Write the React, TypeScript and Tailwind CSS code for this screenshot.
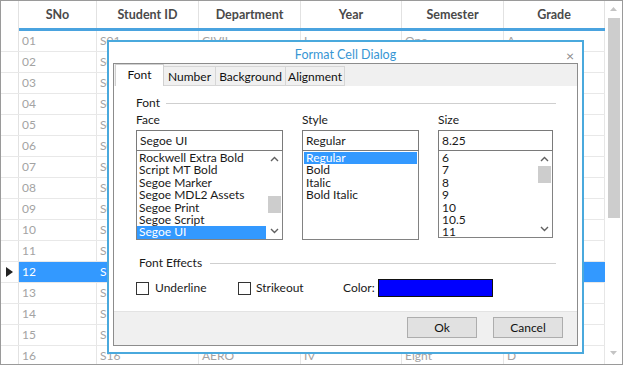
import React from "react";

const FONT = { fontFamily: '"Segoe UI", Lato, "Open Sans", sans-serif' };

const depts = ["CIVIL", "MECH", "EEE", "ECE", "CSE", "IT", "CHEM", "BIO", "CIVIL", "MECH", "EEE", "ECE", "CSE", "IT", "CHEM", "AERO"];
const years = ["I", "I", "II", "II", "III", "III", "IV", "IV", "I", "II", "III", "IV", "I", "II", "III", "IV"];
const sems = ["One", "Two", "Three", "Four", "Five", "Six", "Seven", "Eight", "One", "Three", "Five", "Seven", "Two", "Four", "Six", "Eight"];
const grades = ["A", "B", "C", "A", "B", "A", "C", "B", "A", "B", "C", "A", "B", "C", "A", "D"];

const rows = Array.from({ length: 16 }, (_, i) => {
  const n = String(i + 1).padStart(2, "0");
  return { sno: n, id: `S${n}`, dept: depts[i], year: years[i], sem: sems[i], grade: grades[i] };
});

const cols = [
  { key: "sno", label: "SNo", w: "w-[78px]" },
  { key: "id", label: "Student ID", w: "w-[102px]" },
  { key: "dept", label: "Department", w: "w-[102px]" },
  { key: "year", label: "Year", w: "w-[101px]" },
  { key: "sem", label: "Semester", w: "w-[102px]" },
  { key: "grade", label: "Grade", w: "w-[101px]" },
] as const;

function Chevron({ up }: { up?: boolean }) {
  return (
    <svg width="9" height="6" viewBox="0 0 9 6" className="text-[#606060]">
      <path d={up ? "M1 5 L4.5 1.5 L8 5" : "M1 1 L4.5 4.5 L8 1"} fill="none" stroke="currentColor" strokeWidth="1.4" />
    </svg>
  );
}

function ListScroll({ thumbTop }: { thumbTop: string }) {
  return (
    <div className="flex w-[16px] flex-col items-center border-l border-white">
      <div className="flex h-[14px] items-center justify-center pt-[2px]">
        <Chevron up />
      </div>
      <div className="relative w-full flex-1">
        <div className={`absolute left-[1px] right-[1px] h-[17px] bg-[#cdcdcd] ${thumbTop}`} />
      </div>
      <div className="flex h-[14px] items-center justify-center pb-[2px]">
        <Chevron />
      </div>
    </div>
  );
}

function Dialog() {
  const faces = ["Rockwell Extra Bold", "Script MT Bold", "Segoe Marker", "Segoe MDL2 Assets", "Segoe Print", "Segoe Script", "Segoe UI"];
  const styles = ["Regular", "Bold", "Italic", "Bold Italic"];
  const sizes = ["6", "7", "8", "9", "10", "10.5", "11"];

  return (
    <div className="absolute left-[107px] top-[40px] flex h-[314px] w-[477px] flex-col border-2 border-[#4aa9dd] bg-white">
      <div className="relative flex h-[21px] items-center justify-center pt-[5px] text-[12.5px] text-[#3796d4]">
        Format Cell Dialog
        <span className="absolute right-[8px] top-[3px] text-[14px] text-[#8a8a8a]">×</span>
      </div>
      <div className="mx-[4px] mb-[6px] flex flex-1 flex-col border border-[#8c8c8c] bg-[#f0f0f0]">
        {/* tabs */}
        <div className="flex h-[22px] items-end pl-[1px] text-[12px] text-[#111]">
          <div className="flex h-[22px] w-[49px] items-center justify-center border border-b-0 border-[#d0d0d0] bg-white pb-[1px]">Font</div>
          <div className="flex h-[20px] w-[52px] items-center justify-center border-y border-r border-[#d6d6d6] bg-[#f0f0f0] pt-[1px]">Number</div>
          <div className="flex h-[20px] w-[70px] items-center justify-center border-y border-r border-[#d6d6d6] bg-[#f0f0f0] pt-[1px]">Background</div>
          <div className="flex h-[20px] w-[59px] items-center justify-center border-y border-r border-[#d6d6d6] bg-[#f0f0f0] pt-[1px]">Alignment</div>
        </div>
        <div className="flex h-[225px] flex-col bg-white pl-[22px] pr-[21px] pt-[10px] text-[12px] text-[#1a1a1a]">
          <div className="flex h-[14px] items-center gap-[6px]">
            <span>Font</span>
            <div className="h-px flex-1 bg-[#cfcfcf]" />
          </div>
          <div className="mt-[2px] flex gap-[19px]">
            {/* Face */}
            <div className="flex w-[147px] flex-col">
              <div className="h-[16px] leading-[16px]">Face</div>
              <div className="mt-[2px] h-[21px] border border-[#7a7a7a] px-[3px] leading-[19px]">Segoe UI</div>
              <div className="flex h-[89px] border border-t-0 border-[#828282]">
                <div className="flex-1 pt-[1px]">
                  {faces.map((f) => (
                    <div
                      key={f}
                      className={`h-[12.4px] pl-[2px] leading-[12.4px] ${f === "Segoe UI" ? "bg-[#3399ff] text-white" : ""}`}
                    >
                      {f}
                    </div>
                  ))}
                </div>
                <ListScroll thumbTop="top-[31px]" />
              </div>
            </div>
            {/* Style */}
            <div className="flex w-[117px] flex-col">
              <div className="h-[16px] leading-[16px]">Style</div>
              <div className="mt-[2px] h-[21px] border border-[#7a7a7a] px-[3px] leading-[19px]">Regular</div>
              <div className="h-[89px] border border-t-0 border-[#828282] px-[1px] pt-[1px]">
                {styles.map((s) => (
                  <div
                    key={s}
                    className={`h-[12.4px] pl-[2px] leading-[12.4px] ${s === "Regular" ? "bg-[#3399ff] text-white" : ""}`}
                  >
                    {s}
                  </div>
                ))}
              </div>
            </div>
            {/* Size */}
            <div className="flex w-[115px] flex-col">
              <div className="h-[16px] leading-[16px]">Size</div>
              <div className="mt-[2px] h-[21px] border border-[#7a7a7a] px-[3px] leading-[19px]">8.25</div>
              <div className="flex h-[87px] border border-t-0 border-[#828282]">
                <div className="flex-1 pt-[1px]">
                  {sizes.map((s) => (
                    <div key={s} className="h-[12.4px] pl-[3px] leading-[12.4px]">
                      {s}
                    </div>
                  ))}
                </div>
                <ListScroll thumbTop="top-[1px]" />
              </div>
            </div>
          </div>
          <div className="mt-[16px] flex h-[14px] items-center gap-[8px] pl-[3px]">
            <span>Font Effects</span>
            <div className="h-px flex-1 bg-[#cfcfcf]" />
          </div>
          <div className="mt-[9px] flex h-[18px] items-center">
            <div className="flex w-[102px] items-center">
              <div className="h-[13px] w-[13px] border border-[#333]" />
              <span className="ml-[6px]">Underline</span>
            </div>
            <div className="flex w-[105px] items-center">
              <div className="h-[13px] w-[13px] border border-[#333]" />
              <span className="ml-[5px]">Strikeout</span>
            </div>
            <span className="w-[35px]">Color:</span>
            <div className="h-[18px] w-[115px] border border-[#111] bg-[#0000ff]" />
          </div>
        </div>
        <div className="flex flex-1 items-start justify-end gap-[16px] border-t border-[#e3e3e3] pr-[14px] pt-[5px] text-[12px] text-[#111]">
          <button className="flex h-[21px] w-[70px] items-center justify-center border border-[#adadad] bg-[#e1e1e1]">Ok</button>
          <button className="flex h-[21px] w-[70px] items-center justify-center border border-[#adadad] bg-[#e1e1e1]">Cancel</button>
        </div>
      </div>
    </div>
  );
}

export default function App() {
  return (
    <div style={FONT} className="relative h-[366px] w-[624px] overflow-hidden bg-white">
      <div className="flex h-[365px] w-[623px] overflow-hidden border border-[#9a9a9a]">
        <div className="flex w-[604px] flex-col">
          {/* header */}
          <div className="flex h-[30px] shrink-0">
            <div className="w-[18px] border-r border-[#e2e2e2]" />
            <div className="flex flex-col">
              <div className="flex h-[27px]">
                {cols.map((c) => (
                  <div
                    key={c.key}
                    className={`${c.w} flex items-center justify-center border-r border-[#e2e2e2] pt-[2px] text-[12.5px] font-bold text-[#4a4a4a]`}
                  >
                    {c.label}
                  </div>
                ))}
              </div>
              <div className="h-[3px] bg-[#4aa3df]" />
            </div>
          </div>
          {rows.map((r, i) => {
            const sel = i === 11;
            return (
              <div key={r.sno} className="flex h-[21px] shrink-0 border-b border-[#e8e8e8]">
                <div className="flex w-[18px] items-center justify-center border-r border-[#e2e2e2]">
                  {sel && (
                    <svg width="7" height="10" viewBox="0 0 7 10">
                      <path d="M0 0 L7 5 L0 10 Z" fill="#222" />
                    </svg>
                  )}
                </div>
                {cols.map((c) => (
                  <div
                    key={c.key}
                    className={`${c.w} flex items-center border-r pl-[3px] text-[12px] ${
                      sel ? "border-[#3399ff] bg-[#3399ff] text-white" : "border-[#e6e6e6] text-[#a3a3a3]"
                    }`}
                  >
                    {r[c.key]}
                  </div>
                ))}
              </div>
            );
          })}
        </div>
        {/* vertical scrollbar */}
        <div className="flex w-[17px] flex-col items-center">
          <div className="flex h-[16px] items-center justify-center">
            <svg width="7" height="4" viewBox="0 0 7 4">
              <path d="M0 4 L3.5 0 L7 4 Z" fill="#c4c4c4" />
            </svg>
          </div>
          <div className="mt-[1px] h-[200px] w-[12px] bg-[#cdcdcd]" />
          <div className="flex-1" />
          <div className="flex h-[22px] items-center justify-center">
            <svg width="7" height="4" viewBox="0 0 7 4">
              <path d="M0 0 L3.5 4 L7 0 Z" fill="#c4c4c4" />
            </svg>
          </div>
        </div>
      </div>
      <Dialog />
    </div>
  );
}
